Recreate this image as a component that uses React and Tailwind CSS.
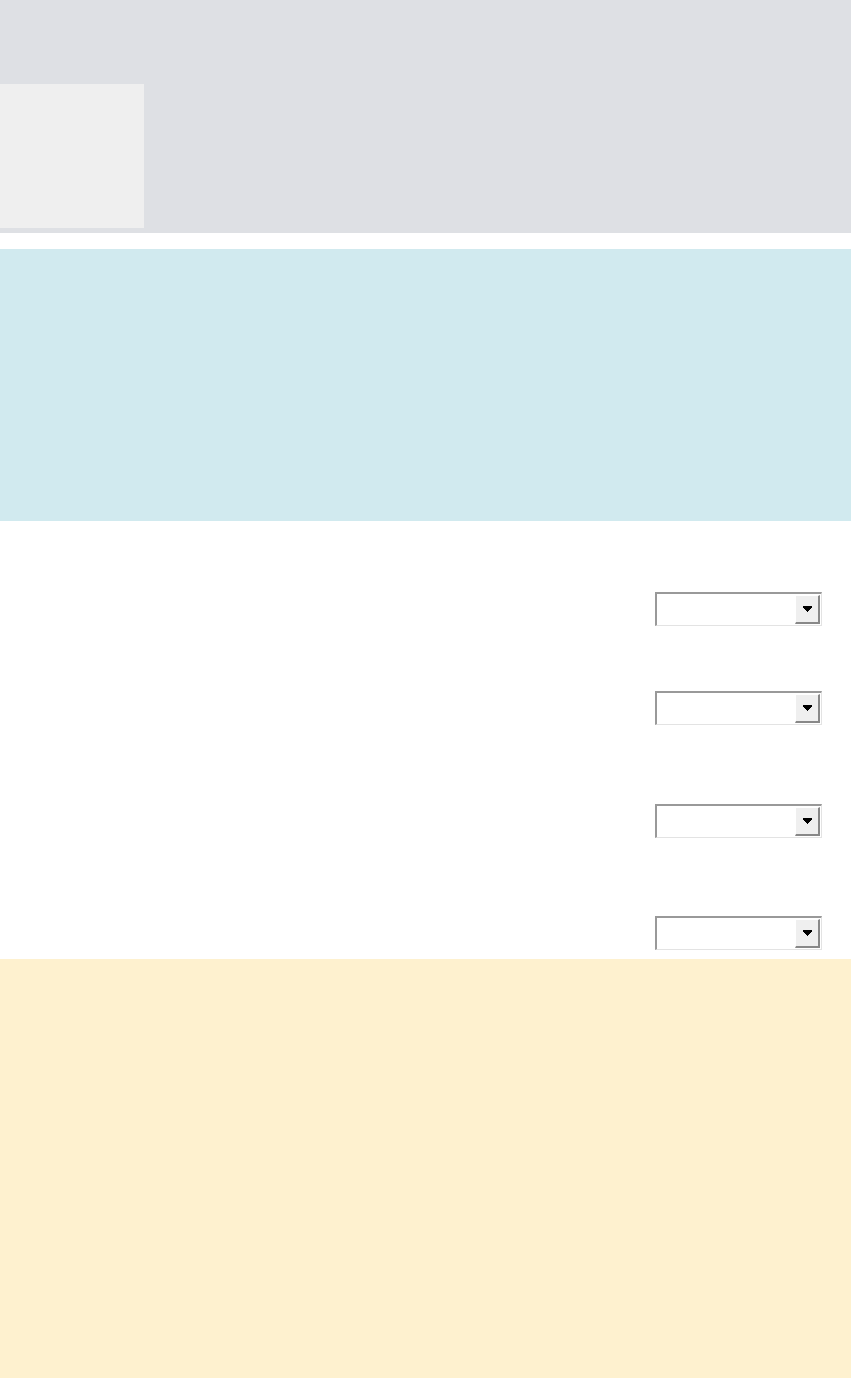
import React from 'react';

const SelectBox = () => {
  return (
    <div className="flex h-[34px] w-[167px] border-t-2 border-l-2 border-b border-r border-t-[#999999] border-l-[#999999] border-b-[#e3e3e3] border-r-[#e3e3e3] bg-white py-[1px] pr-[1px]">
      <div className="flex-1" />
      <div className="flex w-[25px] items-center justify-center border-t border-l border-t-white border-l-white border-b-2 border-r-2 border-b-[#888888] border-r-[#888888] bg-[#efefef]">
        <svg width="9" height="6" viewBox="0 0 9 6" shapeRendering="crispEdges">
          <path d="M0 0h9v2H8v1H7v1H6v1H5v1H4V5H3V4H2V3H1V2H0z" fill="#000" />
        </svg>
      </div>
    </div>
  );
};

const App = () => {
  return (
    <div className="w-full bg-white font-['Liberation_Sans',sans-serif]">
      <header className="h-[233px] bg-[#dee0e4] pt-[84px]">
        <div className="h-[144px] w-[144px] bg-[#efefef]" />
      </header>

      <section className="mt-4 h-[272px] bg-[#d1eaef]" />

      <section className="flex flex-col items-end pr-[29px] pt-[71px] pb-[9px]">
        <SelectBox />
        <div className="mt-[65px]">
          <SelectBox />
        </div>
        <div className="mt-[79px]">
          <SelectBox />
        </div>
        <div className="mt-[78px]">
          <SelectBox />
        </div>
      </section>

      <footer className="h-[419px] bg-[#fef1cf]" />
    </div>
  );
};

export default App;
